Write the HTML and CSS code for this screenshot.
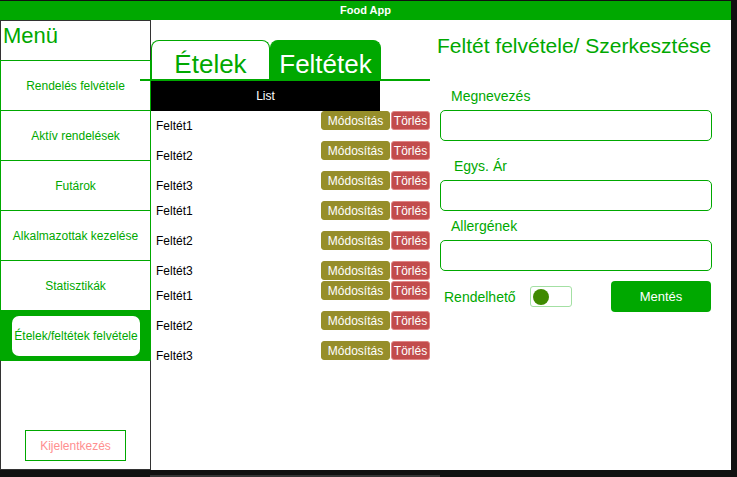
FILE: index.html
```html
<!DOCTYPE html>
<html lang="hu">
<head>
    <meta charset="UTF-8">
    <meta name="viewport" content="width=device-width, initial-scale=1.0">
    <title>Food App</title>
    <link rel="stylesheet" href="styles.css">
</head>
<body>
    <div class="app">
        <header class="topbar">Food App</header>
        <div class="content">
            <nav class="sidebar">
                <div class="menu-title">Menü</div>
                <div class="nav-item">Rendelés felvétele</div>
                <div class="nav-item">Aktív rendelések</div>
                <div class="nav-item">Futárok</div>
                <div class="nav-item">Alkalmazottak kezelése</div>
                <div class="nav-item">Statisztikák</div>
                <div class="nav-item active"><span class="nav-pill">Ételek/feltétek felvétele</span></div>
                <div class="sidebar-bottom">
                    <button class="logout">Kijelentkezés</button>
                </div>
            </nav>

            <main class="main">
                <section class="list-panel">
                    <div class="tabs">
                        <div class="tab tab-food">Ételek</div>
                        <div class="tab tab-extra active">Feltétek</div>
                    </div>
                    <div class="list-head">List</div>
                    <div class="list">
                        <div class="row"><span class="row-name">Feltét1</span><div class="row-actions"><button class="btn-edit">Módosítás</button><button class="btn-delete">Törlés</button></div></div>
                        <div class="row"><span class="row-name">Feltét2</span><div class="row-actions"><button class="btn-edit">Módosítás</button><button class="btn-delete">Törlés</button></div></div>
                        <div class="row"><span class="row-name">Feltét3</span><div class="row-actions"><button class="btn-edit">Módosítás</button><button class="btn-delete">Törlés</button></div></div>
                        <div class="row row-up"><span class="row-name">Feltét1</span><div class="row-actions"><button class="btn-edit">Módosítás</button><button class="btn-delete">Törlés</button></div></div>
                        <div class="row row-up"><span class="row-name">Feltét2</span><div class="row-actions"><button class="btn-edit">Módosítás</button><button class="btn-delete">Törlés</button></div></div>
                        <div class="row row-up row-short"><span class="row-name">Feltét3</span><div class="row-actions"><button class="btn-edit">Módosítás</button><button class="btn-delete">Törlés</button></div></div>
                        <div class="row"><span class="row-name">Feltét1</span><div class="row-actions"><button class="btn-edit">Módosítás</button><button class="btn-delete">Törlés</button></div></div>
                        <div class="row"><span class="row-name">Feltét2</span><div class="row-actions"><button class="btn-edit">Módosítás</button><button class="btn-delete">Törlés</button></div></div>
                        <div class="row"><span class="row-name">Feltét3</span><div class="row-actions"><button class="btn-edit">Módosítás</button><button class="btn-delete">Törlés</button></div></div>
                    </div>
                </section>

                <section class="form-panel">
                    <h2 class="form-title">Feltét felvétele/ Szerkesztése</h2>
                    <div class="field field-first">
                        <label class="field-label">Megnevezés</label>
                        <input class="field-input" type="text">
                    </div>
                    <div class="field field-second">
                        <label class="field-label label-indent">Egys. Ár</label>
                        <input class="field-input" type="text">
                    </div>
                    <div class="field field-third">
                        <label class="field-label">Allergének</label>
                        <input class="field-input" type="text">
                    </div>
                    <div class="form-actions">
                        <span class="avail-label">Rendelhető</span>
                        <div class="toggle"><span class="knob"></span></div>
                        <button class="save">Mentés</button>
                    </div>
                </section>
            </main>
        </div>
    </div>
    <div class="scrollbar"></div>
</body>
</html>
```

FILE: styles.css
```css
body {
    margin: 0;
    padding-top: 1px;
    background: #111;
    font-family: "Liberation Sans", Arial, sans-serif;
    overflow: hidden;
}
.app {
    width: 731px;
    height: 469px;
    background: white;
}
.topbar {
    height: 19px;
    line-height: 19px;
    background: #00a800;
    color: white;
    font-size: 11px;
    font-weight: bold;
    text-align: center;
}
.content {
    display: flex;
    height: 450px;
}

/* sidebar */
.sidebar {
    width: 151px;
    display: flex;
    flex-direction: column;
    flex-shrink: 0;
}
.menu-title {
    box-sizing: border-box;
    height: 40px;
    border: 1px solid #333;
    border-bottom: 0;
    padding: 2px 0 0 2px;
    font-size: 22px;
    line-height: 25px;
    color: #00a800;
}
.nav-item {
    box-sizing: border-box;
    height: 50px;
    border: 1px solid #00a800;
    border-bottom: 0;
    display: flex;
    align-items: center;
    justify-content: center;
    font-size: 12px;
    color: #00a800;
}
.nav-item.active {
    background: #00a800;
    align-items: flex-start;
    justify-content: flex-start;
    padding: 5px 0 0 11px;
}
.nav-pill {
    width: 128px;
    height: 40px;
    background: white;
    border-radius: 7px;
    display: flex;
    align-items: center;
    justify-content: center;
    white-space: nowrap;
}
.sidebar-bottom {
    box-sizing: border-box;
    flex: 1;
    border: 1px solid #333;
    border-top: 1px solid #00a800;
    display: flex;
    align-items: flex-end;
    justify-content: center;
    padding-bottom: 8px;
}
.logout {
    width: 101px;
    height: 31px;
    background: white;
    border: 1px solid #00a800;
    color: #ff8f8f;
    font-family: inherit;
    font-size: 12px;
    padding: 0;
}

/* list */
.main {
    flex: 1;
    display: flex;
}
.list-panel {
    width: 279px;
    flex-shrink: 0;
}
.tabs {
    box-sizing: border-box;
    display: flex;
    height: 41px;
    margin: 20px 0 0 -11px;
    padding-left: 11px;
    border-bottom: 2px solid #00a800;
}
.tab {
    box-sizing: border-box;
    height: 39px;
    border: 1px solid #00a800;
    border-bottom: 0;
    border-radius: 8px 8px 0 0;
    padding-top: 8px;
    font-size: 26px;
    line-height: 30px;
    text-align: center;
    color: #00a800;
}
.tab-food {
    width: 119px;
}
.tab-extra {
    width: 111px;
}
.tab.active {
    background: #00a800;
    color: white;
}
.list-head {
    width: 229px;
    height: 30px;
    line-height: 30px;
    background: black;
    color: white;
    font-size: 12px;
    text-align: center;
}
.row {
    display: flex;
    justify-content: space-between;
    height: 30px;
}
.row-short {
    height: 20px;
}
.row-name {
    padding: 7px 0 0 5px;
    font-size: 12px;
    line-height: 16px;
    color: black;
}
.row-up .row-name {
    padding-top: 2px;
}
.row-actions {
    display: flex;
    gap: 1px;
}
.row-actions button {
    box-sizing: border-box;
    height: 19px;
    padding: 0;
    border-radius: 3px;
    color: white;
    font-family: inherit;
    font-size: 12px;
}
.btn-edit {
    width: 69px;
    background: #968e2a;
    border: 1px solid #968e2a;
}
.btn-delete {
    width: 39px;
    background: #c24c4c;
    border: 1px solid #df8585;
}

/* form */
.form-panel {
    flex: 1;
}
.form-title {
    margin: 14px 0 0 7px;
    font-size: 21px;
    line-height: 24px;
    font-weight: normal;
    color: #00a800;
    white-space: nowrap;
}
.field-first {
    margin-top: 30px;
}
.field-second {
    margin-top: 17px;
}
.field-third {
    margin-top: 7px;
}
.field-label {
    display: block;
    padding-left: 21px;
    font-size: 14px;
    line-height: 16px;
    color: #00a800;
}
.label-indent {
    padding-left: 24px;
}
.field-input {
    display: block;
    box-sizing: border-box;
    width: 272px;
    height: 31px;
    margin: 6px 0 0 10px;
    border: 1px solid #00a800;
    border-radius: 5px;
    outline: none;
}
.form-actions {
    display: flex;
    align-items: center;
    height: 31px;
    margin-top: 10px;
    padding-left: 14px;
}
.avail-label {
    width: 86px;
    font-size: 14px;
    color: #00a800;
}
.toggle {
    box-sizing: border-box;
    width: 42px;
    height: 21px;
    border: 1px solid #a3e0a3;
    border-radius: 3px;
    display: flex;
    align-items: center;
    padding-left: 2px;
}
.knob {
    width: 16px;
    height: 16px;
    border-radius: 50%;
    background: #3f8a00;
}
.save {
    width: 100px;
    height: 31px;
    margin-left: 39px;
    background: #00a800;
    border: none;
    border-radius: 4px;
    color: white;
    font-family: inherit;
    font-size: 13px;
}
.scrollbar {
    width: 290px;
    height: 2px;
    margin: 5px 0 0 150px;
    background: #363636;
}
```
